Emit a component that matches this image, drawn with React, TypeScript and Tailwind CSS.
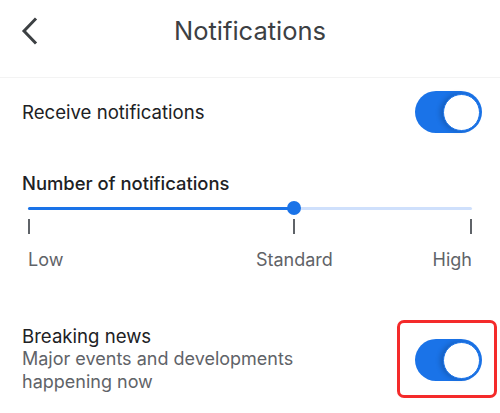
import { useState } from 'react';

// Pill switch with a white knob, iOS style
function Switch({ on, onChange }: { on: boolean; onChange: () => void }) {
  return (
    <button
      onClick={onChange}
      className={`relative w-[67px] h-[42px] rounded-full shrink-0 flex items-center px-[2px] ${
        on ? 'bg-[#1a73e8] justify-end' : 'bg-[#dadce0] justify-start'
      }`}
    >
      <span className="w-[37px] h-[37px] rounded-full bg-white border border-[#1a73e8] shadow-[-3px_0_5px_rgba(0,0,0,0.18)]" />
    </button>
  );
}

// stops sit at 0%, 60% and 100% of the track
const STEPS = [
  { label: 'Low', at: 0 },
  { label: 'Standard', at: 60 },
  { label: 'High', at: 100 },
];

export default function App() {
  const [receive, setReceive] = useState(true);
  const [breaking, setBreaking] = useState(true);
  const [level, setLevel] = useState(1);

  const pct = STEPS[level].at;

  return (
    <div
      className="w-[500px] h-[413px] bg-white overflow-hidden text-[#202124]"
      style={{ fontFamily: 'Inter, "Noto Sans", sans-serif' }}
    >
      {/* Header */}
      <div className="h-[78px] grid grid-cols-[1fr_auto_1fr] items-start pt-[16px] border-b border-[#f3f3f3]">
        <button className="pl-[20px] pt-[1px] justify-self-start">
          <svg width="20" height="28" viewBox="0 0 20 28" fill="none">
            <path d="M15 2.5 L4 14 L15 25.5" stroke="#3c4043" strokeWidth="3" strokeLinecap="square" strokeLinejoin="miter" />
          </svg>
        </button>
        <h1 className="text-[25.5px] leading-[30px] text-[#3c4043]">Notifications</h1>
        <div />
      </div>

      {/* Receive notifications */}
      <div className="flex items-center justify-between pl-[22px] pr-[18px] mt-[13px]">
        <span className="text-[18.6px] leading-[24px]">Receive notifications</span>
        <Switch on={receive} onChange={() => setReceive(!receive)} />
      </div>

      {/* Number of notifications slider */}
      <div className="mt-[38px] px-[22px]">
        <div className="text-[18.4px] leading-[24px] font-medium">Number of notifications</div>
        <div className="px-[6px]">
          <div className="relative h-[14px] mt-[6px] flex items-center">
            <div className="h-[3px] w-full bg-[#cfe0fc] rounded-full" />
            <div className="absolute left-0 h-[3px] bg-[#1a73e8] rounded-full" style={{ width: `${pct}%` }} />
            <div
              className="absolute w-[14px] h-[14px] -ml-[7px] rounded-full bg-[#1a73e8]"
              style={{ left: `${pct}%` }}
            />
          </div>
          <div className="flex mt-[4px] h-[15px]">
            <button onClick={() => setLevel(0)} className="w-[2px] h-full bg-[#5f6368]" />
            <div className="flex-[3]" />
            <button onClick={() => setLevel(1)} className="w-[2px] h-full bg-[#5f6368]" />
            <div className="flex-[2]" />
            <button onClick={() => setLevel(2)} className="w-[2px] h-full bg-[#5f6368]" />
          </div>
          <div className="flex mt-[14px] text-[18px] leading-[24px] text-[#5f6368] whitespace-nowrap">
            <div className="w-0 flex justify-start">Low</div>
            <div className="flex-[3]" />
            <div className="w-0 flex justify-center">Standard</div>
            <div className="flex-[2]" />
            <div className="w-0 flex justify-end">High</div>
          </div>
        </div>
      </div>

      {/* Breaking news */}
      <div className="flex items-center justify-between pl-[22px] pr-[3px] mt-[48px]">
        <div>
          <div className="text-[18.6px] leading-[22px]">Breaking news</div>
          <div className="text-[18px] leading-[23px] text-[#5f6368]">
            Major events and developments
            <br />
            happening now
          </div>
        </div>
        <div className="border-[3px] border-[#f42a2a] rounded-[7px] pl-[15px] pr-[12px] pt-[16px] pb-[14px]">
          <Switch on={breaking} onChange={() => setBreaking(!breaking)} />
        </div>
      </div>
    </div>
  );
}
